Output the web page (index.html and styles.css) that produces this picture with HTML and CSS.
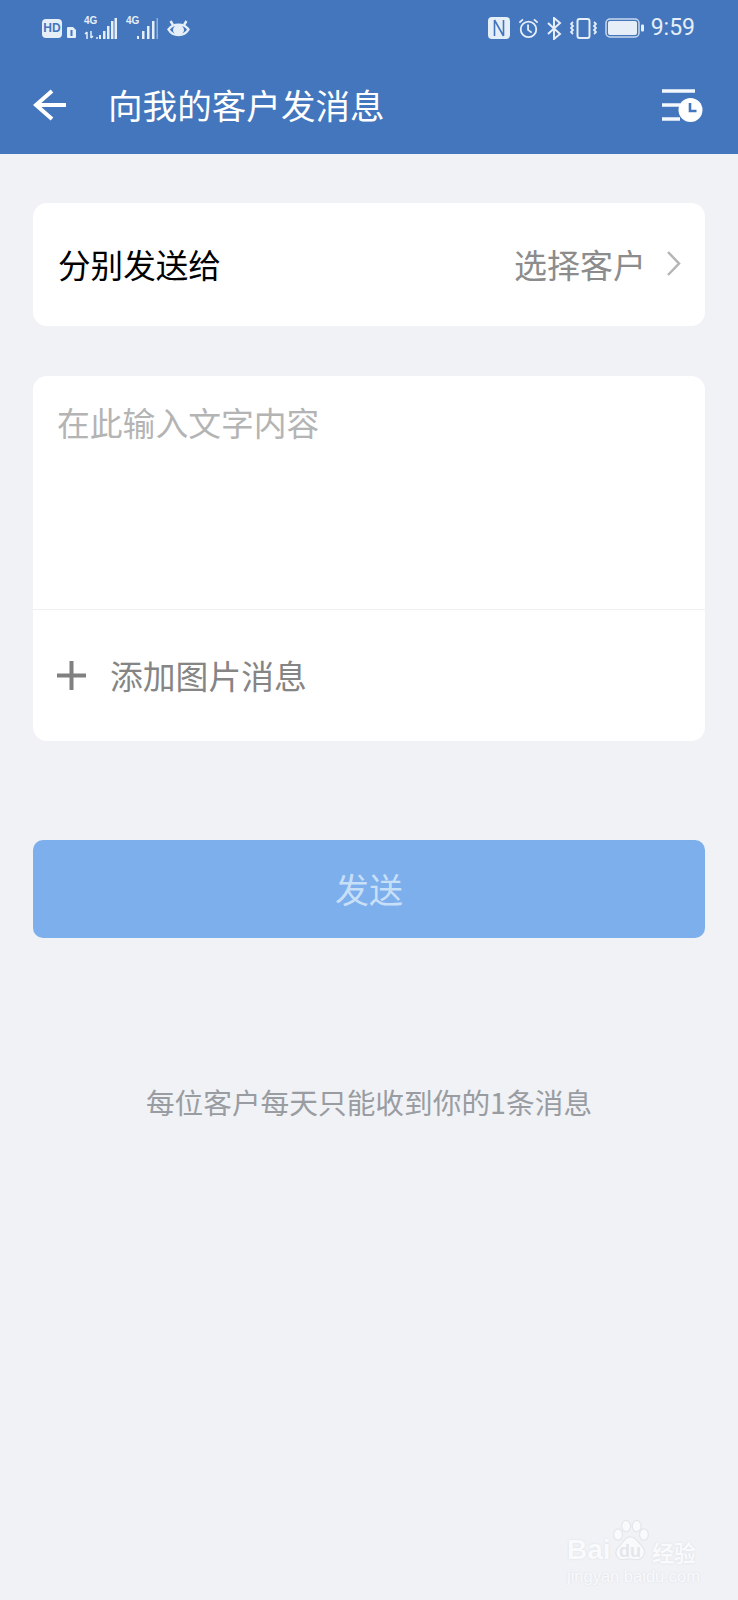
FILE: index.html
```html
<!DOCTYPE html>
<html lang="zh-CN">
<head>
  <meta charset="UTF-8" />
  <meta name="viewport" content="width=device-width, initial-scale=1.0" />
  <title>向我的客户发消息</title>
  <link rel="stylesheet" href="styles.css">
</head>
<body>

  <header class="app-header">
    <div class="status-bar">
      <div class="status-group">
        <span class="hd-badge">HD</span>
        <svg class="sim" width="9" height="11" viewBox="0 0 9 11"><path d="M1 0h5l3 3v7a1 1 0 0 1-1 1H1a1 1 0 0 1-1-1V1a1 1 0 0 1 1-1z" fill="#e6eef8"/><rect x="3.5" y="3" width="2" height="6" fill="#4376bd"/></svg>
        <div class="signal signal-first">
          <span class="net">4G</span>
          <svg class="net-arrows" width="14" height="8" viewBox="0 0 14 8"><path d="M3 8V1M1 3l2-2M7 0v7M7 7l2-2M13 6v2" stroke="#e6eef8" stroke-width="1.5" fill="none"/></svg>
          <svg class="bars" width="18" height="21" viewBox="0 0 18 21"><rect x="0" y="17" width="2" height="4" fill="#e6eef8"/><rect x="4" y="13" width="2.5" height="8" fill="#e6eef8"/><rect x="8" y="8" width="2.500" height="13" fill="#e6eef8"/><rect x="12" y="3" width="2.500" height="18" fill="#e6eef8"/><rect x="15.500" y="0" width="2.500" height="21" fill="#e6eef8"/></svg>
        </div>
        <div class="signal signal-second">
          <span class="net">4G</span>
          <svg class="bars" width="21" height="21" viewBox="0 0 21 21"><rect x="0" y="18" width="2" height="3" fill="#e6eef8"/><rect x="5" y="13" width="2.500" height="8" fill="#e6eef8"/><rect x="10" y="8" width="2.500" height="13" fill="#e6eef8"/><rect x="15" y="3" width="2.500" height="18" fill="#e6eef8"/><rect x="19.500" y="0" width="1.500" height="21" fill="#8fb0dc"/></svg>
        </div>
        <svg class="eye" width="23" height="20" viewBox="0 0 23 20"><path d="M1.500 11.500C6 5 17 5 21.500 11.500 17 19 6 19 1.500 11.500z" fill="none" stroke="#e6eef8" stroke-width="2.400"/><ellipse cx="11.500" cy="12" rx="5.500" ry="5" fill="#e6eef8"/><path d="M3.500 3l2.500 4M19.500 3L17 7" stroke="#e6eef8" stroke-width="2.400"/></svg>
      </div>
      <div class="status-group status-right">
        <svg width="22" height="22" viewBox="0 0 22 22"><rect width="22" height="22" rx="4" fill="#e6eef8"/><path d="M6.500 3v16M15.500 3v16M6.500 3l9 16" stroke="#4376bd" stroke-width="1.600" fill="none"/></svg>
        <svg width="21" height="21" viewBox="0 0 23 23"><circle cx="11.500" cy="12.500" r="8.500" fill="none" stroke="#e6eef8" stroke-width="2"/><path d="M11 7v6l4 3M1.500 5l4-3.500M21.500 5l-4-3.500" stroke="#e6eef8" stroke-width="2" fill="none"/></svg>
        <svg width="15" height="23" viewBox="0 0 15 23"><path d="M1 6l12 11-6 5V1l6 5L1 17" stroke="#e6eef8" stroke-width="2" fill="none"/></svg>
        <svg width="27" height="21" viewBox="0 0 27 21"><rect x="7.500" y="1" width="12" height="19" rx="2" fill="none" stroke="#e6eef8" stroke-width="2"/><path d="M3 4l-2 2 2 2-2 2 2 2-2 2 2 2M24 4l2 2-2 2 2 2-2 2 2 2-2 2" stroke="#e6eef8" stroke-width="1.800" fill="none"/></svg>
        <svg class="battery" width="39" height="20" viewBox="0 0 39 20"><rect x="1" y="1" width="33" height="18" rx="4" fill="none" stroke="#c9d9ee" stroke-width="1.500"/><rect x="3" y="3" width="29" height="14" rx="2" fill="#e6eef8"/><rect x="36" y="6.500" width="3" height="7" rx="1" fill="#e6eef8"/></svg>
        <span class="clock">9:59</span>
      </div>
    </div>
    <div class="toolbar">
      <svg class="back-icon" width="34" height="32" viewBox="0 0 34 32"><path d="M33 16H3M19 2L3 16l16 14" fill="none" stroke="#fff" stroke-width="4"/></svg>
      <h1 class="page-title">向我的客户发消息</h1>
      <svg class="history-icon" width="41" height="33" viewBox="0 0 41 33"><path d="M0 2h33M0 16h18M0 30h18" stroke="#f4f7fc" stroke-width="3.500"/><circle cx="28.500" cy="21" r="12" fill="#fff"/><path d="M28 14v8h6.500" fill="none" stroke="#4376bd" stroke-width="2.600"/></svg>
    </div>
  </header>

  <main class="content">
    <section class="card recipient-row">
      <span class="recipient-label">分别发送给</span>
      <span class="recipient-pick">选择客户</span>
      <svg class="chevron" width="15" height="25" viewBox="0 0 15 25"><path d="M2 1l11 11.500L2 24" fill="none" stroke="#b5b5b5" stroke-width="2.500"/></svg>
    </section>

    <section class="card message-card">
      <div class="message-input">在此输入文字内容</div>
      <div class="add-image">
        <svg class="plus" width="29" height="29" viewBox="0 0 29 29"><path d="M14.500 0v29M0 14.500h29" stroke="#808080" stroke-width="4"/></svg>
        <span class="add-label">添加图片消息</span>
      </div>
    </section>

    <div class="send-button">发送</div>

    <p class="send-note">每位客户每天只能收到你的1条消息</p>
  </main>

  <div class="watermark">
    <div class="watermark-logo">
      <span class="wm-bai">Bai</span>
      <svg class="wm-paw" width="40" height="42" viewBox="0 0 44 52"><g fill="#f9fafc" stroke="#e4e6eb" stroke-width="1.500"><ellipse cx="6" cy="18" rx="5.500" ry="7"/><ellipse cx="16" cy="7.500" rx="5.500" ry="7"/><ellipse cx="29" cy="7.500" rx="5.500" ry="7"/><ellipse cx="38" cy="18" rx="5.500" ry="7"/><path d="M21 21c7 0 10 7 15 12 6 7 1 17-8 16-4 0-9-2-14 0-9 1-14-8-8-15 6-4 7-13 15-13z"/></g></svg>
      <span class="wm-du">du</span>
      <span class="wm-cn">经验</span>
    </div>
    <div class="watermark-url">jingyan.baidu.com</div>
  </div>

</body>
</html>
```

FILE: styles.css
```css
body {
  font-family: "Noto Sans CJK SC", "Noto Sans", sans-serif;
  margin: 0;
  padding: 0;
  min-height: 1600px;
  position: relative;
  overflow: hidden;
  background-color: #f0f2f6;
}

.app-header {
  background: #4376bd;
  height: 154px;
  color: #fff;
}

.status-bar {
  height: 56px;
  padding: 0 43px 0 42px;
  display: flex;
  align-items: center;
  justify-content: space-between;
  color: #e6eef8;
}

.status-group {
  display: flex;
  align-items: center;
}

.status-right {
  gap: 8px;
}

.hd-badge {
  width: 20px;
  height: 19px;
  border-radius: 4px;
  background: #e6eef8;
  color: #4376bd;
  font-family: "Liberation Sans", sans-serif;
  font-size: 12px;
  font-weight: bold;
  line-height: 19px;
  text-align: center;
}

.sim {
  margin: 8px 0 0 5px;
}

.signal {
  position: relative;
  height: 22px;
  display: flex;
  align-items: flex-end;
}

.signal-first {
  width: 33px;
  margin-left: 8px;
  justify-content: flex-end;
}

.signal-second {
  width: 32px;
  margin-left: 9px;
  justify-content: flex-end;
}

.net {
  position: absolute;
  left: 0;
  top: -1px;
  font-family: "Liberation Sans", sans-serif;
  font-size: 10px;
  font-weight: bold;
  line-height: 10px;
}

.net-arrows {
  position: absolute;
  left: 0;
  bottom: 0;
}

.eye {
  margin-left: 9px;
}

.clock {
  font-family: Roboto, sans-serif;
  font-size: 23px;
  line-height: 28px;
  margin-left: -1px;
}

.toolbar {
  height: 98px;
  padding: 0 35px 0 33px;
  display: flex;
  align-items: center;
}

.back-icon {
  flex: none;
}

.page-title {
  flex: 1;
  margin: 0 0 2px 41px;
  font-size: 34.600px;
  font-weight: 400;
  line-height: 48px;
}

.history-icon {
  flex: none;
}

.content {
  padding: 49px 33px 0;
}

.card {
  background: #fff;
  border-radius: 14px;
}

.recipient-row {
  height: 123px;
  padding: 0 24px 2px 25px;
  box-sizing: border-box;
  display: flex;
  align-items: center;
}

.recipient-label {
  flex: 1;
  font-size: 32.600px;
  color: #000;
}

.recipient-pick {
  font-size: 33px;
  color: #8c8c8c;
}

.chevron {
  margin-left: 20px;
}

.message-card {
  margin-top: 50px;
  height: 365px;
  display: flex;
  flex-direction: column;
}

.message-input {
  height: 234px;
  padding: 22px 24px 0;
  box-sizing: border-box;
  border-bottom: 1px solid #f0f0f2;
  font-size: 32.800px;
  line-height: 48px;
  color: #b4b4b4;
}

.add-image {
  flex: 1;
  padding: 0 24px;
  display: flex;
  align-items: center;
  font-size: 32.800px;
  color: #858585;
}

.add-label {
  margin-bottom: 2px;
}

.plus {
  margin-right: 24px;
}

.send-button {
  margin-top: 99px;
  height: 98px;
  border-radius: 10px;
  background: #7dafec;
  color: #c8dff8;
  font-size: 34px;
  line-height: 98px;
  text-align: center;
}

.send-note {
  margin: 141px 0 0;
  font-size: 28.700px;
  line-height: 46px;
  text-align: center;
  color: #999ca1;
}

/* baidu jingyan stamp, sits over the page background */
.watermark {
  position: absolute;
  left: 567px;
  top: 1520px;
  width: 146px;
  color: #f9fafc;
  text-shadow: 0 0 2px #d8dbe1;
}

.watermark-logo {
  position: relative;
  height: 52px;
  font-family: "Liberation Sans", sans-serif;
  font-weight: bold;
}

.wm-bai {
  position: absolute;
  left: 0;
  top: 12px;
  font-size: 28px;
  line-height: 36px;
}

.wm-paw {
  position: absolute;
  left: 44px;
  top: 0;
}

.wm-du {
  position: absolute;
  left: 52px;
  top: 21px;
  font-size: 18px;
  line-height: 20px;
  color: #e4e6eb;
  text-shadow: none;
}

.wm-cn {
  position: absolute;
  left: 85px;
  top: 16px;
  font-family: "Noto Sans CJK SC", sans-serif;
  font-size: 22px;
  line-height: 30px;
}

.watermark-url {
  margin-top: -6px;
  font-family: "Liberation Sans", sans-serif;
  font-size: 16.500px;
  line-height: 20px;
}
```
